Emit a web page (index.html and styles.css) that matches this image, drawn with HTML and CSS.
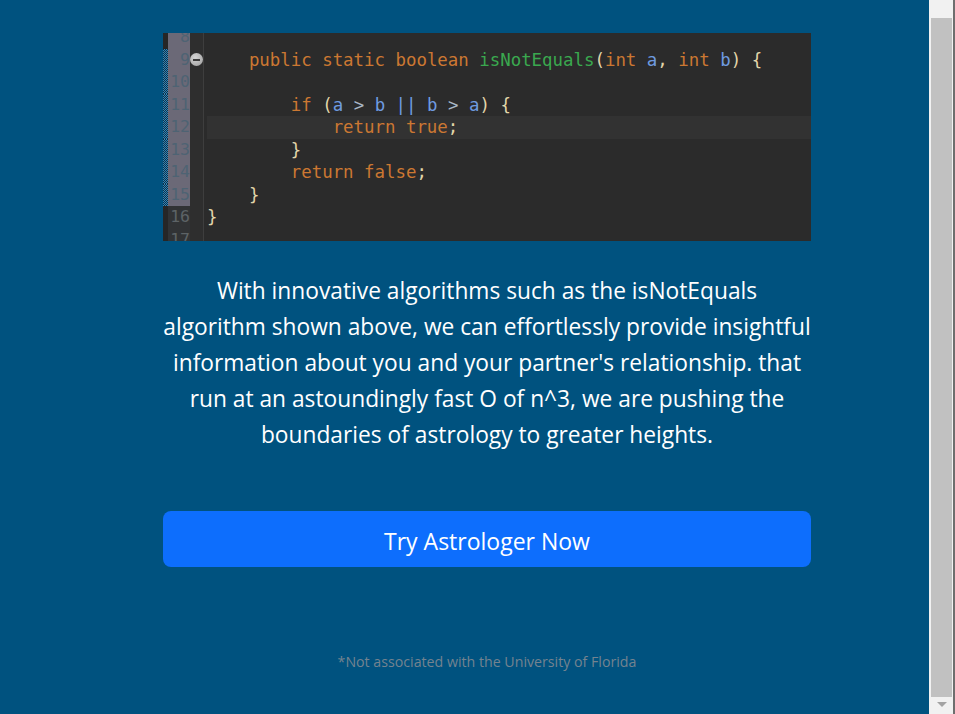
FILE: index.html
```html
<!DOCTYPE html>
<html lang="en">
<head>
<meta charset="utf-8">
<title>Astrologer</title>
<link rel="stylesheet" href="styles.css">
</head>
<body>
<div class="page">
  <main class="content">
    <div class="code">
      <div class="lines">
        <div class="ln sel"><span class="strip"></span><span class="num">8</span><span class="fold"></span><span class="src"> </span></div>
        <div class="ln sel mark"><span class="strip"></span><span class="num">9</span><span class="fold"><span class="minus"></span></span><span class="src">    <i class="k">public static boolean</i> <i class="m">isNotEquals</i><i class="p">(</i><i class="k">int</i> <i class="v">a</i><i class="p">,</i> <i class="k">int</i> <i class="v">b</i><i class="p">)</i> <i class="p">{</i></span></div>
        <div class="ln sel mark"><span class="strip"></span><span class="num">10</span><span class="fold"></span><span class="src"> </span></div>
        <div class="ln sel mark"><span class="strip"></span><span class="num">11</span><span class="fold"></span><span class="src">        <i class="k">if</i> <i class="p">(</i><i class="v">a</i> <i class="o">&gt;</i> <i class="v">b</i> <i class="v">||</i> <i class="v">b</i> <i class="o">&gt;</i> <i class="v">a</i><i class="p">)</i> <i class="p">{</i></span></div>
        <div class="ln sel mark"><span class="strip"></span><span class="num">12</span><span class="fold"></span><span class="src cur">            <i class="k">return true</i><i class="p">;</i></span></div>
        <div class="ln sel mark"><span class="strip"></span><span class="num">13</span><span class="fold"></span><span class="src">        <i class="p">}</i></span></div>
        <div class="ln sel mark"><span class="strip"></span><span class="num">14</span><span class="fold"></span><span class="src">        <i class="k">return false</i><i class="p">;</i></span></div>
        <div class="ln sel mark"><span class="strip"></span><span class="num">15</span><span class="fold"></span><span class="src">    <i class="p">}</i></span></div>
        <div class="ln"><span class="strip"></span><span class="num">16</span><span class="fold"></span><span class="src"><i class="p">}</i></span></div>
        <div class="ln"><span class="strip"></span><span class="num">17</span><span class="fold"></span><span class="src"> </span></div>
      </div>
    </div>

    <p class="lead">With innovative algorithms such as the isNotEquals<br>
      algorithm shown above, we can effortlessly provide insightful<br>
      information about you and your partner's relationship. that<br>
      run at an astoundingly fast O of n^3, we are pushing the<br>
      boundaries of astrology to greater heights.</p>

    <a class="btn" href="#">Try Astrologer Now</a>

    <p class="note">*Not associated with the University of Florida</p>
  </main>
  <div class="scrollbar">
    <div class="thumb"></div>
    <div class="arrow"></div>
  </div>
</div>
</body>
</html>
```

FILE: styles.css
```css
* { box-sizing: border-box; }

html, body {
  margin: 0;
  height: 714px;
  overflow: hidden;
}

body {
  background: #00527f;
  font-family: "Open Sans", "Noto Sans", sans-serif;
  color: #fff;
}

.page {
  display: flex;
  height: 714px;
}

.content {
  flex: 1;
  display: flex;
  flex-direction: column;
  padding: 33px 118px 0 163px;
}

/* code screenshot */
.code {
  height: 208px;
  overflow: hidden;
  background: #2b2b2b;
  font-family: "DejaVu Sans Mono", monospace;
  font-size: 17.4px;
}

.lines {
  margin-top: -7px;
}

.ln {
  display: flex;
  height: 22.5px;
  line-height: 22.5px;
}

.strip {
  width: 5px;
  flex: none;
  background: #262626;
}

.ln.mark .strip {
  background-color: #1c4a66;
  background-image: repeating-conic-gradient(#2a86c0 0 25%, #163040 0 50%);
  background-size: 2px 2px;
}

.num {
  width: 22px;
  flex: none;
  text-align: right;
  color: #5d6366;
  background: #313335;
  font-size: 16.5px;
}

.ln.sel .num {
  background: #6b6977;
  color: #4e6373;
}

.fold {
  width: 14px;
  flex: none;
  background: #2e2e2e;
  border-right: 1px solid #3e3e3e;
  display: flex;
  align-items: center;
  justify-content: center;
}

.minus {
  width: 13px;
  height: 13px;
  border-radius: 50%;
  background: radial-gradient(circle at 40% 35%, #d4d4d4, #9c9c9c);
  display: flex;
  align-items: center;
  justify-content: center;
}

.minus::after {
  content: "";
  width: 7px;
  height: 2px;
  background: #3c3c3c;
}

.src {
  flex: 1;
  margin-left: 3px;
  white-space: pre;
  color: #a9b7c6;
}

.src.cur {
  background: #323232;
}

.src i { font-style: normal; }
.k { color: #cc7832; }
.m { color: #3aa84f; }
.v { color: #6f9be0; }
.p { color: #e2d6aa; }
.o { color: #a9b7c6; }

/* text */
.lead {
  margin: 32px -20px 0;
  font-size: 22.75px;
  line-height: 36px;
  text-align: center;
  white-space: nowrap;
}

.btn {
  margin-top: 58px;
  height: 56px;
  padding-top: 3px;
  display: flex;
  align-items: center;
  justify-content: center;
  background: #0d6efd;
  border-radius: 8px;
  color: #fff;
  text-decoration: none;
  font-size: 23px;
}

.note {
  margin: 84px 0 0;
  font-size: 14.2px;
  line-height: 21px;
  text-align: center;
  color: #74838f;
}

/* scrollbar */
.scrollbar {
  width: 26px;
  flex: none;
  background: #f1f1f1;
  border-right: 2px solid #6e6e6e;
  padding: 18px 1px 0 2px;
  display: flex;
  flex-direction: column;
  align-items: center;
}

.thumb {
  width: 100%;
  height: 679px;
  background: #c1c1c1;
}

.arrow {
  margin-top: 5px;
  width: 0;
  height: 0;
  border-left: 5.5px solid transparent;
  border-right: 5.5px solid transparent;
  border-top: 5px solid #a3a3a3;
}
```
